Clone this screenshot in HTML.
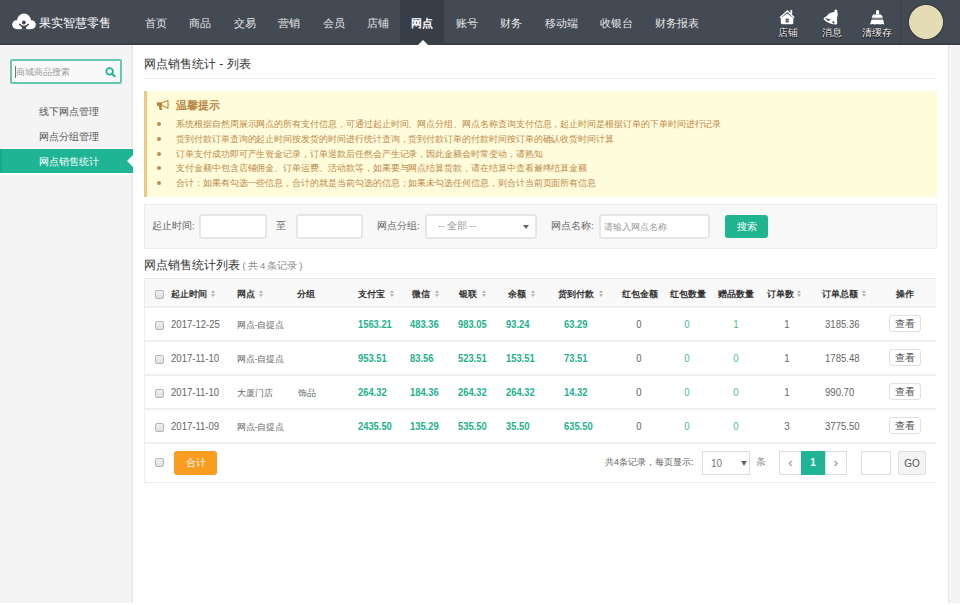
<!DOCTYPE html>
<html><head><meta charset="utf-8">
<style>
*{margin:0;padding:0;box-sizing:border-box}
html,body{width:960px;height:605px;overflow:hidden;background:#fff;font-family:"Liberation Sans",sans-serif;color:#333}
.abs{position:absolute}
#hdr{position:absolute;left:0;top:0;width:960px;height:45px;background:#434a54;border-bottom:2px solid #393f48}
#logo{position:absolute;left:12px;top:13px;width:24px;height:17px}
#logotxt{position:absolute;left:39px;top:15px;font-size:12px;color:#fff;letter-spacing:0px;white-space:nowrap;line-height:16px}
.nav{position:absolute;top:0;height:43px;line-height:47px;font-size:10.5px;color:#e6e6e6;text-align:center;white-space:nowrap}
.nav.on{background:#383e47;color:#fff;font-weight:bold}
.nav.on:after{content:"";position:absolute;left:50%;margin-left:-4.5px;bottom:-2px;border-left:5px solid transparent;border-right:5px solid transparent;border-bottom:5px solid #fff}
.ico{position:absolute;top:0;height:43px;text-align:center;color:#fff;font-size:9.5px}
.ico span{position:absolute;left:0;right:0;top:27px;line-height:12px;white-space:nowrap;text-shadow:0 0 1px #000,0 1px 1px #000}
#sep{position:absolute;left:900px;top:0;width:1px;height:43px;background:#3b4149}
#avatar{position:absolute;left:909px;top:5px;width:34px;height:34px;border-radius:50%;background:#e4dcb5;border:1px solid #efe2b8;box-shadow:0 0 1px 1px #383e47}
#side{position:absolute;left:0;top:45px;width:133px;height:558px;background:#f4f4f4;border-right:2px solid #e9e9e9}
#sbox{position:absolute;left:10px;top:59px;width:112px;height:25px;border:2px solid #63c9b1;background:#f9f9f9;border-radius:2px}
#sbox .ph{position:absolute;left:4px;top:4.5px;font-size:8.7px;color:#9a9a9a;line-height:12px;white-space:nowrap}
#sbox .cur{position:absolute;left:3px;top:5px;width:1px;height:12px;background:#777}
.mi{position:absolute;left:0;width:133px;height:24px;line-height:26px;font-size:10px;color:#555;padding-left:39px;white-space:nowrap}
.mi.on{background:#1fb594;color:#fff;box-shadow:0 1.5px 0 #fff,0 -1px 0 #fafafa;border-left:2px solid #1ba88a;padding-left:37px}
.mi.on:after{content:"";position:absolute;right:0;top:6px;border-top:6px solid transparent;border-bottom:6px solid transparent;border-right:6px solid #fff}
#scroll{position:absolute;left:948px;top:45px;width:12px;height:558px;background:#f3f3f3;border-left:1px solid #e8e8e8}
#title{position:absolute;left:144px;top:56px;font-size:12px;color:#333;line-height:16px;white-space:nowrap}
#tline{position:absolute;left:144px;top:78px;width:793px;height:1px;background:#ececec}
#warn{position:absolute;left:144px;top:91px;width:793px;height:106px;background:#fffcdc;border-left:3px solid #ecca83}
#warn .wt{position:absolute;left:29px;top:7px;font-size:10.5px;font-weight:bold;color:#b8843f;line-height:14px;white-space:nowrap}
#warn ul{position:absolute;left:0;top:26px;list-style:none}
#warn li{position:relative;height:14.8px;line-height:14.8px;font-size:9px;color:#bd8847;letter-spacing:-0.06px;padding-left:29px;white-space:nowrap}
#warn li:before{content:"";position:absolute;left:10px;top:5px;width:4px;height:4px;border-radius:50%;background:#c08b4c}
#filter{position:absolute;left:144px;top:204px;width:793px;height:45px;background:#f8f8f8;border:1px solid #ececec}
.lbl{position:absolute;font-size:9.5px;color:#666;line-height:12px;white-space:nowrap}
.inp{position:absolute;height:25px;background:#fff;border:2px solid #e6e6e6;border-radius:3px}
.btn{position:absolute;border-radius:3px;color:#fff;text-align:center;font-size:9.5px}
#ltitle{position:absolute;left:144px;top:257px;font-size:12px;color:#333;line-height:16px;white-space:nowrap}
#ltitle small{font-size:9.5px;color:#888;letter-spacing:-0.22px}
#tbl{position:absolute;left:144px;top:278px;width:793px;height:205px;border:1px solid #ececec;border-right:none}
.th{position:absolute;left:0;top:0;width:791px;height:29px;background:#f9f9f9;border-bottom:2px solid #eeeeee}
.tr{position:absolute;left:0;width:791px;height:34px;border-bottom:2px solid #efefef}
.c{position:absolute;font-size:9px;line-height:12px;white-space:nowrap;color:#555}
.th .c{font-weight:bold;color:#333;font-size:9px}
.c.n{font-size:10.4px;color:#666;transform:scaleX(0.92);transform-origin:0 50%}
.c.n.ctr{transform-origin:50% 50%}
.c.z{font-size:9px;color:#666}
.ctr{width:30px;text-align:center}
.cb{position:absolute;width:9px;height:9px;border:1px solid #b5b5b5;border-radius:2px;background:linear-gradient(#f0f0f0,#dedede)}
.c.g{color:#1db18e;font-weight:bold;transform:scaleX(0.9)}
.c.gl{color:#3dbd9f}
.sort{position:absolute;width:5px;height:8px}
.sort:before{content:"";position:absolute;left:0;top:0;border-left:2.5px solid transparent;border-right:2.5px solid transparent;border-bottom:3px solid #b5b5b5}
.sort:after{content:"";position:absolute;left:0;top:4px;border-left:2.5px solid transparent;border-right:2.5px solid transparent;border-top:3px solid #b5b5b5}
.view{position:absolute;left:744px;top:7px;width:32px;height:17px;border:1px solid #e0e0e0;border-radius:3px;font-size:9.5px;line-height:15px;text-align:center;color:#555;background:#fff}
.pg{position:absolute;top:451px;height:24px;border:1px solid #ddd;background:#fff;font-size:10px;line-height:22px;text-align:center;color:#777}
</style></head><body>
<div id="hdr">
  <svg id="logo" viewBox="0 0 24 17"><circle cx="4.6" cy="11.6" r="4.4" fill="#fff"/><circle cx="12" cy="7.6" r="7" fill="#fff"/><circle cx="19.4" cy="11.6" r="4.4" fill="#fff"/><rect x="4.6" y="9" width="14.8" height="7.2" fill="#fff"/><circle cx="11.9" cy="9.5" r="1.9" fill="#434a54"/><path d="M7.3 11 Q12 16.2 16.7 11" stroke="#434a54" stroke-width="1.5" fill="none"/><path d="M9.4 16.4 L10.2 13.4 L13.8 13.4 L14.6 16.4Z" fill="#434a54"/></svg>
  <div id="logotxt">果实智慧零售</div>
  <div class="nav" style="left:134px;width:44px">首页</div>
  <div class="nav" style="left:178px;width:44px">商品</div>
  <div class="nav" style="left:222px;width:45px">交易</div>
  <div class="nav" style="left:267px;width:44px">营销</div>
  <div class="nav" style="left:311px;width:45px">会员</div>
  <div class="nav" style="left:356px;width:44px">店铺</div>
  <div class="nav on" style="left:400px;width:44px">网点</div>
  <div class="nav" style="left:444px;width:45px">账号</div>
  <div class="nav" style="left:489px;width:44px">财务</div>
  <div class="nav" style="left:533px;width:56px">移动端</div>
  <div class="nav" style="left:589px;width:55px">收银台</div>
  <div class="nav" style="left:644px;width:66px">财务报表</div>
  <div class="ico" style="left:772px;width:32px">
    <span>店铺</span></div>
  <div class="ico" style="left:816px;width:32px">
    <span>消息</span></div>
  <div class="ico" style="left:861px;width:32px">
    <span>清缓存</span></div>
  <svg class="abs" style="left:0;top:0" width="960" height="43" viewBox="0 0 960 43">
<path d="M780 17.8 L787.3 11 L794.3 17.8" stroke="#fff" stroke-width="1.4" fill="none" stroke-linejoin="miter"/>
<rect x="790.4" y="10" width="1.8" height="4" fill="#fff"/>
<path d="M780.8 18 L787.3 13.4 L793.3 18 L793.3 22.8 Q793.3 24.3 791.8 24.3 L782.3 24.3 Q780.8 24.3 780.8 22.8 Z" fill="#fff"/>
<rect x="785.6" y="18.4" width="3.2" height="4.2" rx="1.4" fill="#434a54"/><rect x="785.6" y="20.2" width="3.2" height="0.7" fill="#fff" opacity=".6"/>
<circle cx="835.9" cy="10.9" r="1.5" fill="#fff"/>
<path d="M834.2 12 C832 12.2 830 12.9 828.5 14 C827.5 15 826.8 16 825.8 16.7 C825 17.2 824.2 17.4 823.5 18.4 C824 20 826 21.5 828 22.4 C830.5 23.6 833.5 24.6 836.5 24.4 C837.5 23.5 837.3 22 837 20.5 C836.8 19 837 17.5 837.6 15.5 C838 13.5 837.8 12 836.5 11.8 Z" fill="#fff"/>
<path d="M825.2 18.1 Q828 18.7 830.8 19.5 Q829.4 21 827.4 20.6 Z" fill="#434a54"/>
<circle cx="833.5" cy="22.4" r="1.1" fill="#434a54"/>
<path d="M876 14.6 L876 11 Q877.5 9.2 879.1 11 L879.1 14.6 Z" fill="#fff"/>
<path d="M873 14.4 L881 14.4 Q882.3 15.5 882.9 17.8 L871.8 17.8 Q872.2 15.5 873 14.4 Z" fill="#fff"/>
<rect x="871.8" y="18.3" width="11.2" height="1" fill="#fff" opacity=".45"/>
<path d="M871.5 19.7 L883.2 19.7 L884.2 24.4 Q882 23.6 880 24.4 Q877.5 23.6 875 24.4 Q872.5 23.6 870 24.4 Z" fill="#fff"/>
</svg>
  <div id="sep"></div>
  <div id="avatar"></div>
</div>
<div id="side">
</div>
<div id="sbox"><div class="cur"></div><div class="ph">商城商品搜索</div>
  <svg class="abs" style="left:93px;top:6px" width="11" height="10" viewBox="0 0 11 10"><circle cx="4.6" cy="4.4" r="3.3" fill="none" stroke="#1ab394" stroke-width="1.8"/><path d="M7 6.8 L9.8 9.4" stroke="#1ab394" stroke-width="2" stroke-linecap="round"/></svg>
</div>
<div class="mi" style="top:99px">线下网点管理</div>
<div class="mi" style="top:124px">网点分组管理</div>
<div class="mi on" style="top:149px">网点销售统计</div>
<div id="scroll"></div>

<div id="title">网点销售统计 - 列表</div>
<div id="tline"></div>
<div id="warn">
  <svg class="abs" style="left:5px;top:5px" width="22" height="18" viewBox="0 0 22 18"><rect x="5" y="6.3" width="5.2" height="3.6" fill="#b9813a"/><path d="M10.2 6.6 L16 4.5 L16 12.2 L10.2 9.6" stroke="#c08a45" stroke-width="1.1" fill="none" stroke-linejoin="round"/><path d="M16.3 7.4 L17.4 8.3 L16.3 9.2Z" fill="#c08a45"/><path d="M6.8 9.7 L9.9 9.7 L9.6 11.6 Q9.9 13 10.4 13.9 L7.6 13.9 Z" fill="#b9813a"/></svg>
  <div class="wt">温馨提示</div>
  <ul>
    <li>系统根据自然周展示网点的所有支付信息，可通过起止时间、网点分组、网点名称查询支付信息，起止时间是根据订单的下单时间进行记录</li>
    <li>货到付款订单查询的起止时间按发货的时间进行统计查询，货到付款订单的付款时间按订单的确认收货时间计算</li>
    <li>订单支付成功即可产生资金记录，订单退款后任然会产生记录，因此金额会时常变动，请熟知</li>
    <li>支付金额中包含店铺佣金、订单运费、活动款等，如果要与网点结算货款，请在结算中查看最终结算金额</li>
    <li>合计：如果有勾选一些信息，合计的就是当前勾选的信息；如果未勾选任何信息，则合计当前页面所有信息</li>
  </ul>
</div>

<div id="filter"></div>
<div class="lbl" style="left:152px;top:220px">起止时间:</div>
<div class="inp" style="left:199px;top:214px;width:68px"></div>
<div class="lbl" style="left:276px;top:220px">至</div>
<div class="inp" style="left:296px;top:214px;width:67px"></div>
<div class="lbl" style="left:377px;top:220px">网点分组:</div>
<div class="inp" style="left:425px;top:214px;width:112px"><span class="abs" style="left:11px;top:4px;font-size:9.5px;color:#999;line-height:12px;white-space:nowrap">-- 全部 --</span><span class="abs" style="left:96px;top:9px;border-left:3px solid transparent;border-right:3px solid transparent;border-top:4.5px solid #666"></span></div>
<div class="lbl" style="left:551px;top:220px">网点名称:</div>
<div class="inp" style="left:599px;top:214px;width:111px"><span class="abs" style="left:3px;top:5px;font-size:9px;color:#999;line-height:12px;white-space:nowrap">请输入网点名称</span></div>
<div class="btn" style="left:725px;top:215px;width:43px;height:23px;line-height:23px;background:#1fb591">搜索</div>

<div id="ltitle">网点销售统计列表<small> ( 共 4 条记录 ) </small></div>

<div id="tbl">
  <div class="th">
    <div class="cb" style="left:10px;top:11px"></div>
    <div class="c" style="left:25.6px;top:9px">起止时间</div><div class="sort" style="left:65.9px;top:11px"></div>
    <div class="c" style="left:91.6px;top:9px">网点</div><div class="sort" style="left:114.3px;top:11px"></div>
    <div class="c" style="left:152.2px;top:9px">分组</div>
    <div class="c" style="left:213.1px;top:9px">支付宝</div><div class="sort" style="left:245px;top:11px"></div>
    <div class="c" style="left:267.3px;top:9px">微信</div><div class="sort" style="left:290.3px;top:11px"></div>
    <div class="c" style="left:313.9px;top:9px">银联</div><div class="sort" style="left:336.9px;top:11px"></div>
    <div class="c" style="left:363.4px;top:9px">余额</div><div class="sort" style="left:386px;top:11px"></div>
    <div class="c" style="left:412.7px;top:9px">货到付款</div><div class="sort" style="left:453.6px;top:11px"></div>
    <div class="c" style="left:476.7px;top:9px">红包金额</div>
    <div class="c" style="left:525px;top:9px">红包数量</div>
    <div class="c" style="left:573.3px;top:9px">赠品数量</div>
    <div class="c" style="left:621.7px;top:9px">订单数</div><div class="sort" style="left:652.3px;top:11px"></div>
    <div class="c" style="left:676.7px;top:9px">订单总额</div><div class="sort" style="left:717.3px;top:11px"></div>
    <div class="c" style="left:751px;top:9px">操作</div>
  </div>
  <div class="tr" style="top:29px">
    <div class="cb" style="left:10px;top:13px"></div>
    <div class="c n" style="left:25.8px;top:11px">2017-12-25</div>
    <div class="c z" style="left:91.5px;top:11px">网点-自提点</div>
    <div class="c n g" style="left:212.6px;top:11px">1563.21</div>
    <div class="c n g" style="left:265.1px;top:11px">483.36</div>
    <div class="c n g" style="left:312.8px;top:11px">983.05</div>
    <div class="c n g" style="left:361.3px;top:11px">93.24</div>
    <div class="c n g" style="left:419px;top:11px">63.29</div>
    <div class="c n ctr " style="left:479.2px;top:11px">0</div>
    <div class="c n ctr gl" style="left:527.4px;top:11px">0</div>
    <div class="c n ctr gl" style="left:576.4px;top:11px">1</div>
    <div class="c n ctr " style="left:626.6px;top:11px">1</div>
    <div class="c n" style="left:680px;top:11px">3185.36</div>
    <div class="view">查看</div>
  </div>
  <div class="tr" style="top:63px">
    <div class="cb" style="left:10px;top:13px"></div>
    <div class="c n" style="left:25.8px;top:11px">2017-11-10</div>
    <div class="c z" style="left:91.5px;top:11px">网点-自提点</div>
    <div class="c n g" style="left:212.6px;top:11px">953.51</div>
    <div class="c n g" style="left:265.1px;top:11px">83.56</div>
    <div class="c n g" style="left:312.8px;top:11px">523.51</div>
    <div class="c n g" style="left:361.3px;top:11px">153.51</div>
    <div class="c n g" style="left:419px;top:11px">73.51</div>
    <div class="c n ctr " style="left:479.2px;top:11px">0</div>
    <div class="c n ctr gl" style="left:527.4px;top:11px">0</div>
    <div class="c n ctr gl" style="left:576.4px;top:11px">0</div>
    <div class="c n ctr " style="left:626.6px;top:11px">1</div>
    <div class="c n" style="left:680px;top:11px">1785.48</div>
    <div class="view">查看</div>
  </div>
  <div class="tr" style="top:97px">
    <div class="cb" style="left:10px;top:13px"></div>
    <div class="c n" style="left:25.8px;top:11px">2017-11-10</div>
    <div class="c z" style="left:91.5px;top:11px">大厦门店</div>
    <div class="c z" style="left:152.5px;top:11px">饰品</div>
    <div class="c n g" style="left:212.6px;top:11px">264.32</div>
    <div class="c n g" style="left:265.1px;top:11px">184.36</div>
    <div class="c n g" style="left:312.8px;top:11px">264.32</div>
    <div class="c n g" style="left:361.3px;top:11px">264.32</div>
    <div class="c n g" style="left:419px;top:11px">14.32</div>
    <div class="c n ctr " style="left:479.2px;top:11px">0</div>
    <div class="c n ctr gl" style="left:527.4px;top:11px">0</div>
    <div class="c n ctr gl" style="left:576.4px;top:11px">0</div>
    <div class="c n ctr " style="left:626.6px;top:11px">1</div>
    <div class="c n" style="left:680px;top:11px">990.70</div>
    <div class="view">查看</div>
  </div>
  <div class="tr" style="top:131px">
    <div class="cb" style="left:10px;top:13px"></div>
    <div class="c n" style="left:25.8px;top:11px">2017-11-09</div>
    <div class="c z" style="left:91.5px;top:11px">网点-自提点</div>
    <div class="c n g" style="left:212.6px;top:11px">2435.50</div>
    <div class="c n g" style="left:265.1px;top:11px">135.29</div>
    <div class="c n g" style="left:312.8px;top:11px">535.50</div>
    <div class="c n g" style="left:361.3px;top:11px">35.50</div>
    <div class="c n g" style="left:419px;top:11px">635.50</div>
    <div class="c n ctr " style="left:479.2px;top:11px">0</div>
    <div class="c n ctr gl" style="left:527.4px;top:11px">0</div>
    <div class="c n ctr gl" style="left:576.4px;top:11px">0</div>
    <div class="c n ctr " style="left:626.6px;top:11px">3</div>
    <div class="c n" style="left:680px;top:11px">3775.50</div>
    <div class="view">查看</div>
  </div>
  <div class="cb" style="left:10px;top:179px"></div>
  <div class="btn" style="left:29px;top:172px;width:43px;height:24px;line-height:24px;background:#f99c20">合计</div>
</div>
<div class="lbl" style="left:605px;top:456px;font-size:9px;color:#666">共4条记录，每页显示:</div>
<div class="pg" style="left:702px;width:48px;text-align:left;padding-left:8px;line-height:24px">10<span class="abs" style="left:38px;top:9px;border-left:3px solid transparent;border-right:3px solid transparent;border-top:5px solid #666"></span></div>
<div class="lbl" style="left:756px;top:456px;color:#888">条</div>
<div class="pg" style="left:779px;width:23px;font-size:13px;line-height:21px;color:#888">‹</div>
<div class="pg" style="left:801px;width:24px;background:#1fb594;border-color:#1fb594;color:#fff;font-weight:bold">1</div>
<div class="pg" style="left:825px;width:22px;font-size:13px;line-height:21px;color:#888">›</div>
<div class="pg" style="left:861px;width:30px"></div>
<div class="pg" style="left:898px;width:28px;background:#f4f4f4;border-radius:2px;color:#555;font-size:10px;line-height:23px">GO</div>
</body></html>
